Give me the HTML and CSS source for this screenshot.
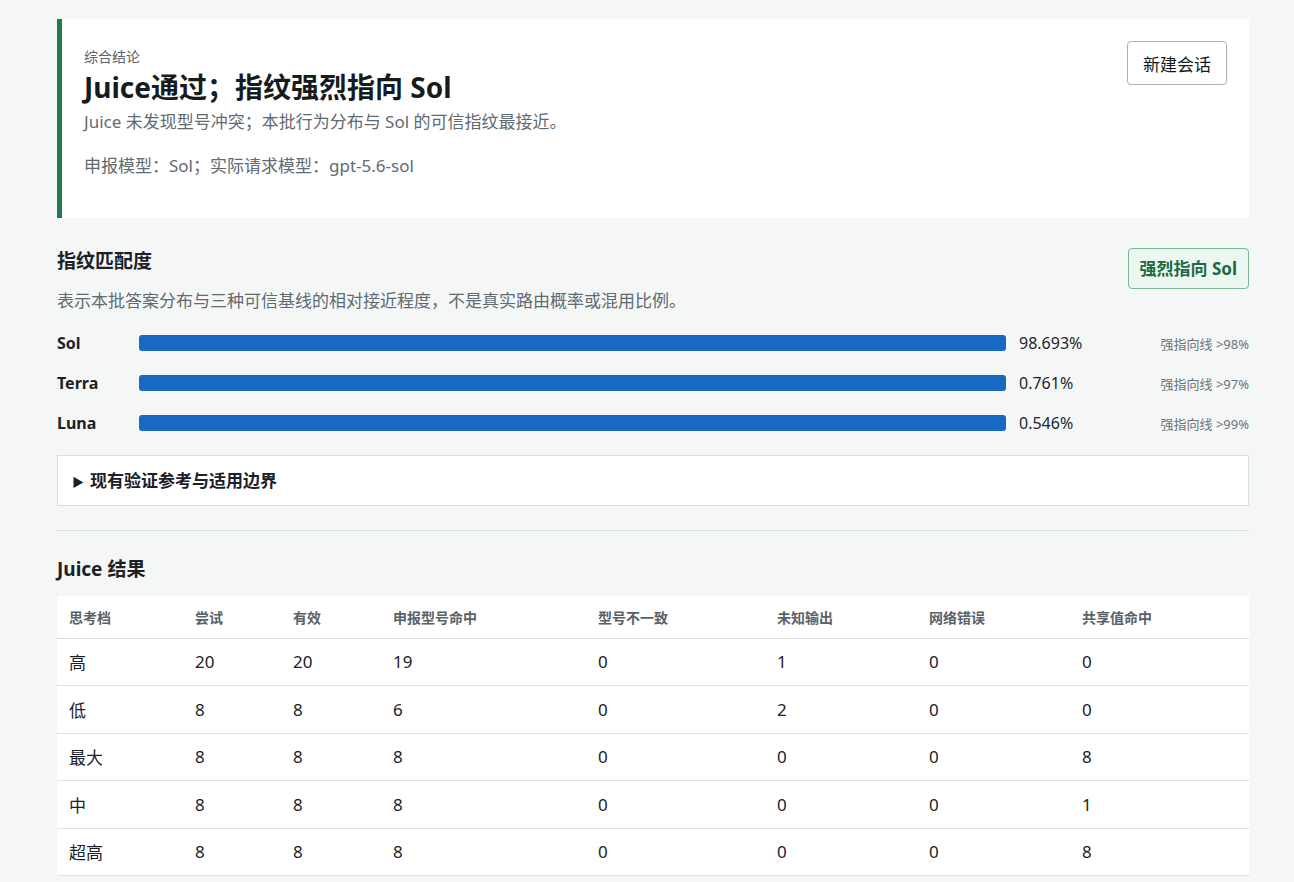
FILE: index.html
```html
<!DOCTYPE html>
<html lang="zh-CN">
<head>
  <meta charset="UTF-8">
  <meta name="viewport" content="width=device-width, initial-scale=1.0">
  <title>Juice 指纹结论</title>
  <link rel="stylesheet" href="styles.css">
</head>
<body>
  <main class="page">

    <section class="verdict">
      <div class="verdict-text">
        <div class="eyebrow">综合结论</div>
        <h1>Juice通过；指纹强烈指向 Sol</h1>
        <p class="summary">Juice 未发现型号冲突；本批行为分布与 Sol 的可信指纹最接近。</p>
        <p class="meta">申报模型：Sol；实际请求模型：gpt-5.6-sol</p>
      </div>
      <button class="btn-new">新建会话</button>
    </section>

    <section class="match">
      <div class="match-head">
        <h2>指纹匹配度</h2>
        <span class="badge">强烈指向 Sol</span>
      </div>
      <p class="desc">表示本批答案分布与三种可信基线的相对接近程度，不是真实路由概率或混用比例。</p>

      <div class="bars">
        <div class="bar-row">
          <span class="bar-label">Sol</span>
          <div class="bar"></div>
          <span class="bar-value">98.693%</span>
          <span class="bar-threshold">强指向线 &gt;98%</span>
        </div>
        <div class="bar-row">
          <span class="bar-label">Terra</span>
          <div class="bar"></div>
          <span class="bar-value">0.761%</span>
          <span class="bar-threshold">强指向线 &gt;97%</span>
        </div>
        <div class="bar-row">
          <span class="bar-label">Luna</span>
          <div class="bar"></div>
          <span class="bar-value">0.546%</span>
          <span class="bar-threshold">强指向线 &gt;99%</span>
        </div>
      </div>

      <details class="refs">
        <summary>现有验证参考与适用边界</summary>
        <p>参考数据仅适用于当前基线版本。</p>
      </details>
    </section>

    <hr class="divider">

    <section class="results">
      <h2>Juice 结果</h2>
      <table class="result-table">
        <thead>
          <tr>
            <th class="c1">思考档</th>
            <th class="c2">尝试</th>
            <th class="c3">有效</th>
            <th class="c4">申报型号命中</th>
            <th class="c5">型号不一致</th>
            <th class="c6">未知输出</th>
            <th class="c7">网络错误</th>
            <th>共享值命中</th>
          </tr>
        </thead>
        <tbody>
          <tr><td>高</td><td>20</td><td>20</td><td>19</td><td>0</td><td>1</td><td>0</td><td>0</td></tr>
          <tr><td>低</td><td>8</td><td>8</td><td>6</td><td>0</td><td>2</td><td>0</td><td>0</td></tr>
          <tr><td>最大</td><td>8</td><td>8</td><td>8</td><td>0</td><td>0</td><td>0</td><td>8</td></tr>
          <tr><td>中</td><td>8</td><td>8</td><td>8</td><td>0</td><td>0</td><td>0</td><td>1</td></tr>
          <tr><td>超高</td><td>8</td><td>8</td><td>8</td><td>0</td><td>0</td><td>0</td><td>8</td></tr>
        </tbody>
      </table>
    </section>

  </main>
</body>
</html>
```

FILE: styles.css
```css
* { box-sizing: border-box; }

body {
  margin: 0;
  background: #f5f7f6;
  color: #1b2127;
  font-family: "Noto Sans", "Noto Sans CJK SC", sans-serif;
  font-size: 17px;
}

.page {
  width: 1192px;
  margin-left: 57px;
  padding-top: 19px;
  padding-bottom: 40px;
}

/* verdict card */
.verdict {
  display: flex;
  justify-content: space-between;
  align-items: flex-start;
  background: #fff;
  border-left: 5px solid #1f7a4d;
  padding: 22px 22px 40px 22px;
}
.verdict-text { padding-top: 6px; }
.eyebrow { font-size: 14px; line-height: 20px; color: #5b646b; }
.verdict h1 {
  margin: 2px 0 0;
  font-size: 28px;
  line-height: 36px;
  font-weight: 700;
  color: #161b20;
}
.summary { margin: 5px 0 0; line-height: 24px; color: #5f6a72; }
.meta { margin: 20px 0 0; line-height: 24px; color: #5f6a72; }

.btn-new {
  height: 44px;
  padding: 0 15px;
  background: #fff;
  border: 1px solid #a9b0b6;
  border-radius: 4px;
  font-family: inherit;
  font-size: 17px;
  color: #161b20;
  cursor: pointer;
}

/* match section */
.match { margin-top: 30px; }
.match-head {
  display: flex;
  justify-content: space-between;
  align-items: flex-start;
}
.match-head h2 {
  margin: 0;
  font-size: 19px;
  line-height: 26px;
  font-weight: 700;
}
.badge {
  display: inline-block;
  height: 41px;
  line-height: 39px;
  padding: 0 11px;
  background: #edf7f1;
  border: 1px solid #79b894;
  border-radius: 4px;
  color: #1d6a40;
  font-size: 17px;
  font-weight: 700;
}
.desc { margin: 0; line-height: 24px; color: #5f6a72; }

.bars { margin-top: 10px; }
.bar-row {
  display: grid;
  grid-template-columns: 82px 1fr 120px 123px;
  align-items: center;
  height: 40px;
}
.bar-label { font-weight: 700; font-size: 16px; }
.bar { height: 16px; background: #1769c4; border-radius: 3px; }
.bar-value { padding-left: 13px; font-size: 16px; color: #20262c; }
.bar-threshold { text-align: right; font-size: 13px; color: #6a747b; }

.refs {
  margin-top: 12px;
  background: #fff;
  border: 1px solid #d9dde1;
}
.refs summary {
  display: block;
  list-style: none;
  height: 49px;
  padding: 0 14px;
  line-height: 49px;
  font-weight: 700;
  cursor: pointer;
}
.refs summary::before { content: "\25B6"; font-size: 12px; margin-right: 6px; }
.refs summary::-webkit-details-marker { display: none; }
.refs p { margin: 0 14px 14px; color: #5f6a72; }

.divider {
  margin: 24px 0 0;
  border: 0;
  border-top: 1px solid #dcdfe2;
}

/* results */
.results { margin-top: 25px; }
.results h2 {
  margin: 0 0 14px;
  font-size: 19px;
  line-height: 26px;
  font-weight: 700;
}
.result-table {
  width: 100%;
  border-collapse: collapse;
  background: #fff;
}
.result-table th {
  height: 42px;
  padding: 0 12px;
  text-align: left;
  font-size: 14px;
  font-weight: 700;
  color: #5a6268;
  border-bottom: 1px solid #d7dce0;
}
.result-table td {
  height: 47.5px;
  padding: 0 12px;
  font-size: 17px;
  color: #1b2127;
  border-bottom: 1px solid #dde1e4;
}
.c1 { width: 126px; }
.c2 { width: 98px; }
.c3 { width: 100px; }
.c4 { width: 205px; }
.c5 { width: 179px; }
.c6 { width: 152px; }
.c7 { width: 153px; }
```
